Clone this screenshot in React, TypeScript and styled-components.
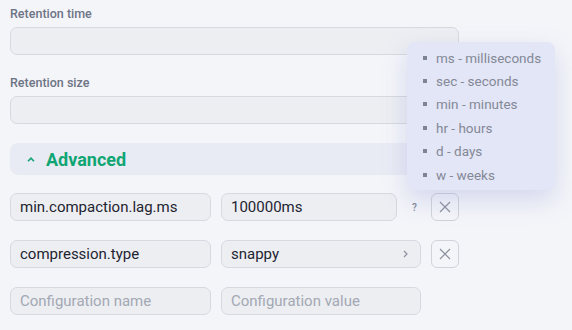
import React from "react";
import styled, { createGlobalStyle } from "styled-components";

const Global = createGlobalStyle`
  html, body { margin: 0; padding: 0; background: #f4f5f9; }
  body { font-family: Roboto, "Liberation Sans", sans-serif; }
  * { box-sizing: border-box; }
`;

const Page = styled.div`
  position: relative;
  width: 572px;
  height: 330px;
  padding: 6px 10px 0 10px;
`;

const Form = styled.div`
  width: 449px;
  display: flex;
  flex-direction: column;
`;

const Field = styled.div<{ $after: number }>`
  display: flex;
  flex-direction: column;
  gap: 5px;
  margin-bottom: ${(p) => p.$after}px;
`;

const Label = styled.div`
  font-size: 12.5px;
  line-height: 16px;
  font-weight: 500;
  color: #6d7486;
`;

const Input = styled.div<{ $placeholder?: boolean }>`
  height: 28px;
  min-width: 0;
  display: flex;
  align-items: center;
  padding: 0 9px;
  background: #eceef2;
  border: 1px solid #d6d9df;
  border-radius: 7px;
  font-size: 15px;
  color: ${(p) => (p.$placeholder ? "#a3a8b2" : "#1e2430")};
`;

const Header = styled.div`
  height: 32px;
  display: flex;
  align-items: center;
  gap: 11px;
  padding-left: 17px;
  background: #e9ebf4;
  border-radius: 8px;
  margin-bottom: 18px;
  font-size: 18px;
  font-weight: 700;
  color: #10a673;
`;

const Row = styled.div`
  display: flex;
  align-items: center;
  gap: 10px;
  height: 28px;
  margin-bottom: 19px;
`;

const Name = styled(Input)`
  flex: 0 0 201px;
`;

const Value = styled(Input)`
  flex: 1 1 auto;
`;

const ValueCell = styled.div`
  flex: 0 0 200px;
  display: flex;
  align-items: center;
  position: relative;
`;

const Help = styled.span`
  flex: 0 0 24px;
  padding-left: 15px;
  font-size: 10px;
  font-weight: 500;
  color: #7c8394;
`;

const Chevron = styled.svg`
  position: absolute;
  right: 13px;
  top: 10px;
`;

const XButton = styled.button`
  width: 28px;
  height: 28px;
  padding: 0;
  display: flex;
  align-items: center;
  justify-content: center;
  background: transparent;
  border: 1px solid #cfd3da;
  border-radius: 6px;
`;

const Spacer = styled.div`
  flex: 0 0 28px;
`;

const Tooltip = styled.ul`
  position: absolute;
  left: 407px;
  top: 42px;
  width: 148px;
  height: 148px;
  margin: 0;
  padding: 4px 0 0 16px;
  list-style: none;
  background: #e3e6f6;
  border-radius: 8px;
  box-shadow: 0 10px 24px rgba(130, 140, 210, 0.28);
`;

const Item = styled.li`
  display: flex;
  align-items: center;
  gap: 9px;
  height: 23.4px;
  font-size: 13.5px;
  color: #838997;
  white-space: nowrap;
  &::before {
    content: "";
    width: 4px;
    height: 4px;
    background: #7d8593;
    flex: 0 0 4px;
  }
`;

const XIcon = () => (
  <svg width="12" height="12" viewBox="0 0 12 12">
    <path d="M1 1L11 11M11 1L1 11" stroke="#8b909c" strokeWidth="1.2" fill="none" />
  </svg>
);

const units = [
  "ms - milliseconds",
  "sec - seconds",
  "min - minutes",
  "hr - hours",
  "d - days",
  "w - weeks",
];

export default function App() {
  return (
    <Page>
      <Global />
      <Form>
        <Field $after={20}>
          <Label>Retention time</Label>
          <Input />
        </Field>
        <Field $after={19}>
          <Label>Retention size</Label>
          <Input />
        </Field>
        <Header>
          <svg width="8" height="5" viewBox="0 0 8 5">
            <path d="M1 4.2L4 1.2L7 4.2" stroke="#10a673" strokeWidth="1.6" fill="none" />
          </svg>
          Advanced
        </Header>
        <Row>
          <Name>min.compaction.lag.ms</Name>
          <ValueCell>
            <Value>100000ms</Value>
            <Help>?</Help>
          </ValueCell>
          <XButton>
            <XIcon />
          </XButton>
        </Row>
        <Row>
          <Name>compression.type</Name>
          <ValueCell>
            <Value>snappy</Value>
            <Chevron width="5" height="8" viewBox="0 0 5 8">
              <path d="M1 1L4 4L1 7" stroke="#8b909c" strokeWidth="1.2" fill="none" />
            </Chevron>
          </ValueCell>
          <XButton>
            <XIcon />
          </XButton>
        </Row>
        <Row>
          <Name $placeholder>Configuration name</Name>
          <ValueCell>
            <Value $placeholder>Configuration value</Value>
          </ValueCell>
          <Spacer />
        </Row>
      </Form>
      <Tooltip>
        {units.map((u) => (
          <Item key={u}>{u}</Item>
        ))}
      </Tooltip>
    </Page>
  );
}
